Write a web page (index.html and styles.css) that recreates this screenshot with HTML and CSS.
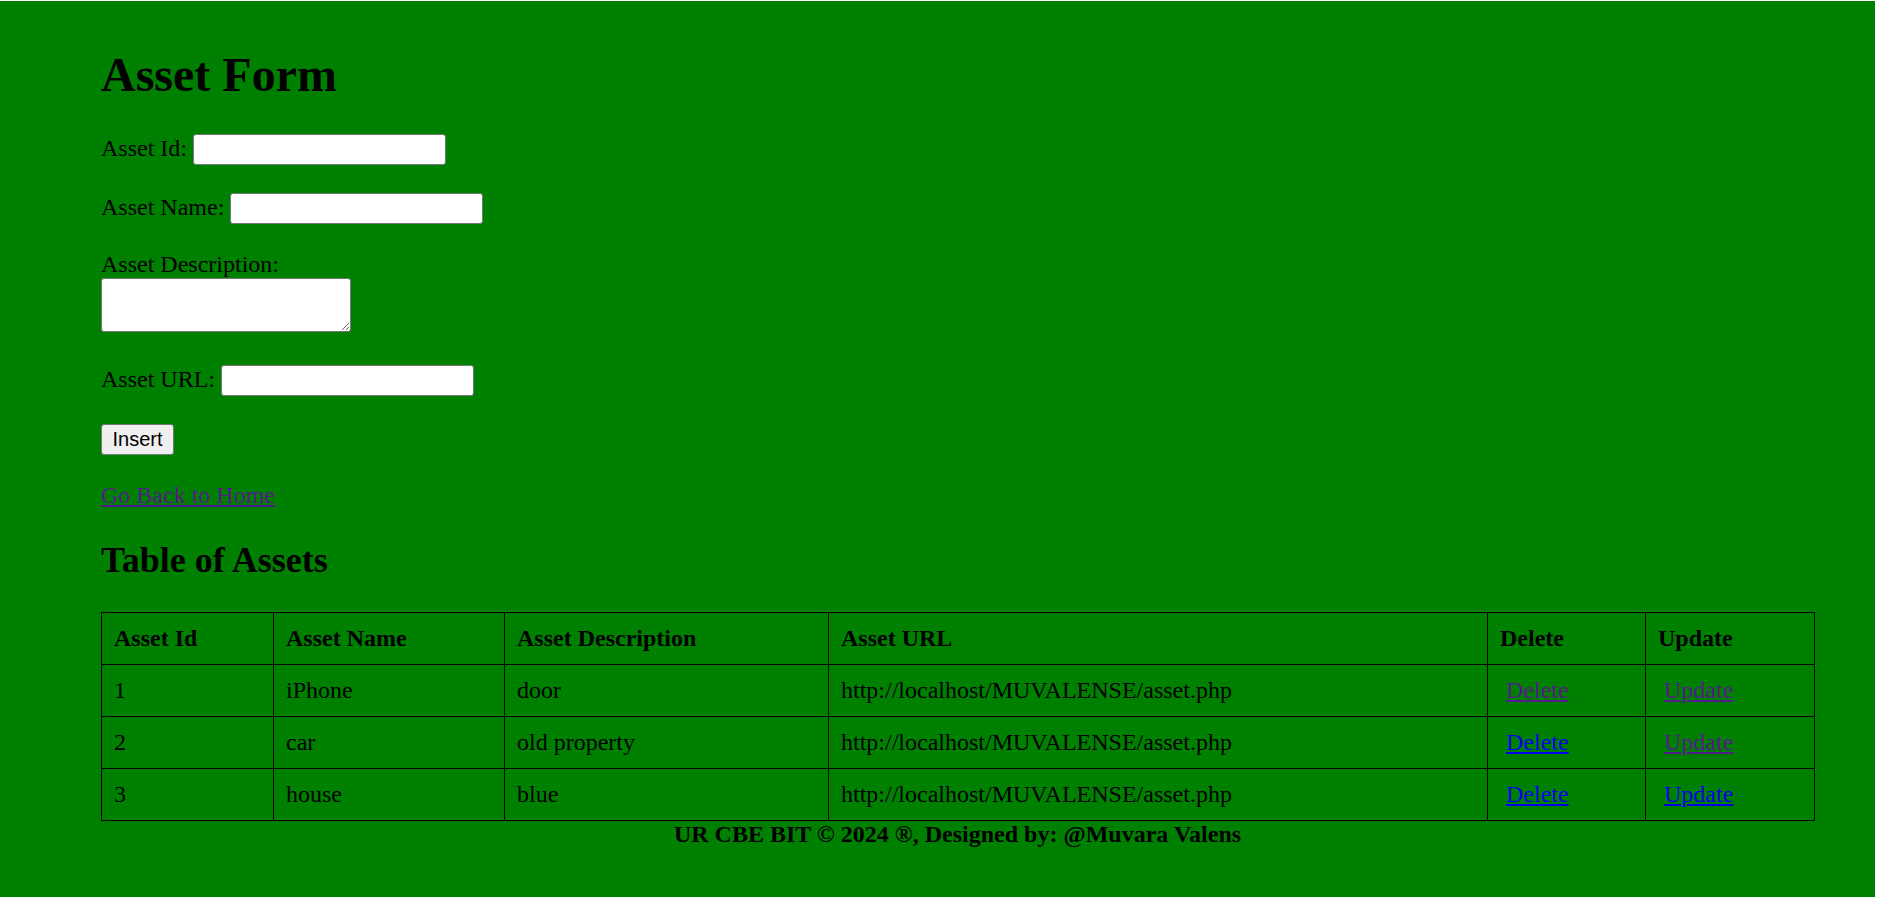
FILE: index.html
```html
<!DOCTYPE html>
<html lang="en">
<head>
<meta charset="utf-8">
<title>Asset Form</title>
<link rel="stylesheet" href="styles.css">
</head>
<body>
<div class="page">
  <h1 class="title">Asset Form</h1>
  <form class="form">
    <div class="row row-id"><label>Asset Id:</label> <input class="field" type="text"></div>
    <div class="row row-name"><label>Asset Name:</label> <input class="field" type="text"></div>
    <div class="row row-desc"><label>Asset Description:</label><textarea class="area"></textarea></div>
    <div class="row row-url"><label>Asset URL:</label> <input class="field" type="text"></div>
    <div class="row row-btn"><button class="btn" type="button">Insert</button></div>
  </form>
  <div class="row row-link"><a class="visited" href="#">Go Back to Home</a></div>
  <h2 class="subtitle">Table of Assets</h2>
  <table class="assets">
    <colgroup>
      <col class="c1"><col class="c2"><col class="c3"><col class="c4"><col class="c5"><col class="c6">
    </colgroup>
    <thead>
      <tr><th>Asset Id</th><th>Asset Name</th><th>Asset Description</th><th>Asset URL</th><th>Delete</th><th>Update</th></tr>
    </thead>
    <tbody>
      <tr><td>1</td><td>iPhone</td><td>door</td><td>http://localhost/MUVALENSE/asset.php</td><td><a class="act visited" href="#">Delete</a></td><td><a class="act visited" href="#">Update</a></td></tr>
      <tr><td>2</td><td>car</td><td>old property</td><td>http://localhost/MUVALENSE/asset.php</td><td><a class="act link" href="#">Delete</a></td><td><a class="act visited" href="#">Update</a></td></tr>
      <tr><td>3</td><td>house</td><td>blue</td><td>http://localhost/MUVALENSE/asset.php</td><td><a class="act link" href="#">Delete</a></td><td><a class="act link" href="#">Update</a></td></tr>
    </tbody>
  </table>
  <p class="footer">UR CBE BIT © 2024 ®, Designed by: @Muvara Valens</p>
</div>
</body>
</html>
```
FILE: styles.css
```css
html, body {
  margin: 0;
  padding: 0;
  background: #ffffff;
}

body {
  font-family: "Liberation Serif", "Times New Roman", serif;
  font-size: 24px;
  color: #000;
}

.page {
  box-sizing: border-box;
  margin-top: 1px;
  width: 1875px;
  height: 896px;
  background: #008000;
  padding: 14px 61px 0 101px;
  overflow: hidden;
}

.title {
  font-size: 48px;
  font-weight: bold;
  margin: 32px 0 32px;
  line-height: normal;
}

.form {
  margin: 0;
}

.row {
  margin: 0;
}

.row-id { margin-bottom: 28px; }
.row-name { margin-bottom: 27px; }
.row-desc { margin-bottom: 33px; }
.row-url { margin-bottom: 28px; }
.row-btn { margin-bottom: 27px; height: 31px; }

.field {
  box-sizing: border-box;
  width: 253px;
  height: 31px;
  border: 1px solid #767676;
  border-radius: 3px;
  background: #fff;
  padding: 1px 3px;
  font-family: "Liberation Sans", Arial, sans-serif;
  font-size: 20px;
  vertical-align: baseline;
  margin: 0;
}

.area {
  display: block;
  box-sizing: border-box;
  width: 250px;
  height: 54px;
  border: 1px solid #767676;
  border-radius: 3px;
  background: #fff;
  margin: 0;
  padding: 2px;
  font-family: "Liberation Mono", monospace;
  font-size: 20px;
}

.btn {
  box-sizing: border-box;
  width: 73px;
  height: 31px;
  border: 1px solid #767676;
  border-radius: 3px;
  background: #efefef;
  color: #000;
  font-family: "Liberation Sans", Arial, sans-serif;
  font-size: 20px;
  padding: 0;
  margin: 0;
  display: block;
}

.visited {
  color: #551a8b;
}

.link {
  color: #0000ee;
}

.subtitle {
  font-size: 36px;
  font-weight: bold;
  margin: 30px 0 31px;
  line-height: normal;
}

.assets {
  width: 100%;
  table-layout: fixed;
  border-collapse: collapse;
  border: 1px solid #000;
}

.c1 { width: 172px; }
.c2 { width: 231px; }
.c3 { width: 324px; }
.c4 { width: 659px; }
.c5 { width: 158px; }
.c6 { width: 169px; }

.assets th, .assets td {
  border: 1px solid #000;
  padding: 12px 12px;
  line-height: 27px;
  text-align: left;
  vertical-align: middle;
  white-space: nowrap;
}

.assets th {
  font-weight: bold;
}

.act {
  margin-left: 6px;
}

.footer {
  margin: 0;
  text-align: center;
  font-weight: bold;
  line-height: normal;
}
```
